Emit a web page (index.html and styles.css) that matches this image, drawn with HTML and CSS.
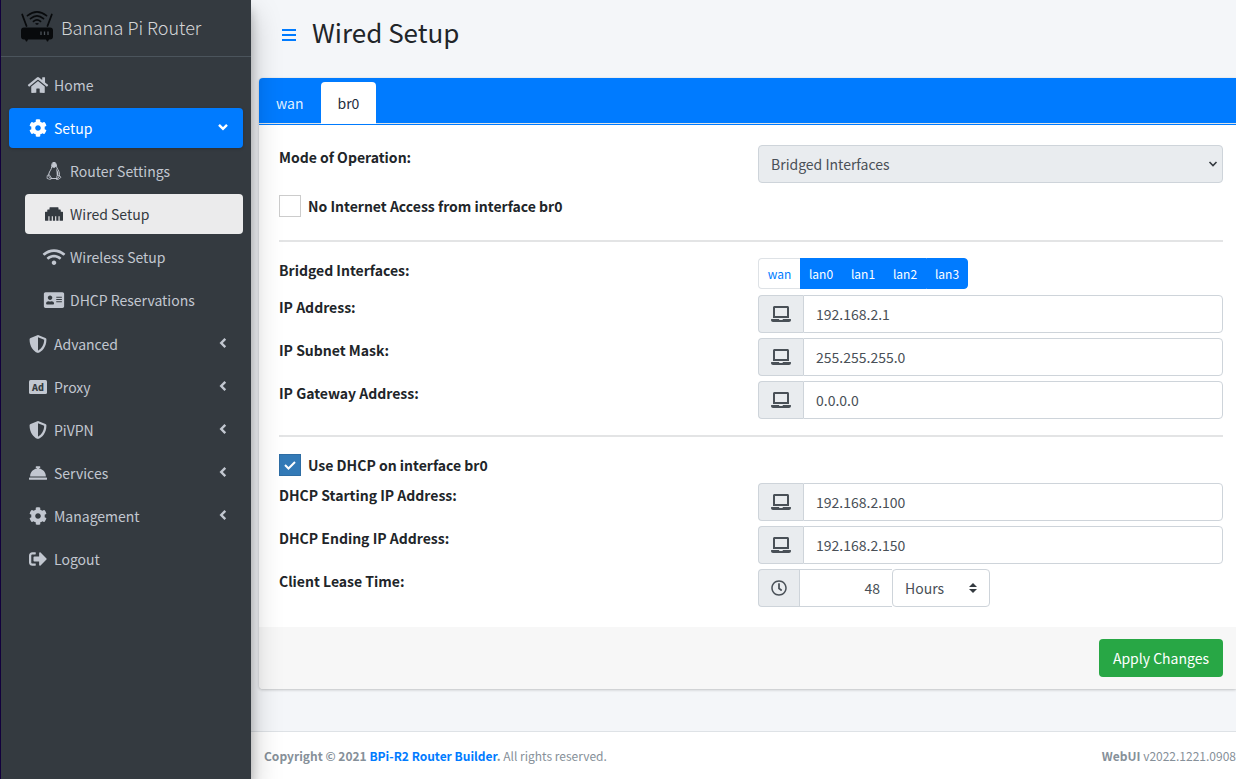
FILE: index.html
```
<!DOCTYPE html>
<html lang="en">
<head>
<meta charset="utf-8">
<title>Wired Setup</title>
<link rel="stylesheet" href="styles.css">
</head>
<body>
<svg class="sprite" aria-hidden="true">
  <symbol id="cog" viewBox="0 0 512 512"><path d="M487.4 315.7l-42.6-24.6c4.3-23.2 4.3-47 0-70.2l42.6-24.6c4.9-2.8 7.1-8.6 5.5-14-11.1-35.6-30-67.8-54.7-94.6-3.8-4.1-10-5.1-14.8-2.3L380.8 110c-17.9-15.4-38.5-27.3-60.8-35.1V25.8c0-5.6-3.9-10.5-9.4-11.7-36.7-8.2-74.3-7.8-109.2 0-5.5 1.2-9.4 6.1-9.4 11.7V75c-22.2 7.9-42.8 19.8-60.8 35.1L88.7 85.5c-4.9-2.8-11-1.9-14.8 2.3-24.7 26.7-43.6 58.9-54.7 94.6-1.7 5.4.6 11.2 5.5 14L67.3 221c-4.3 23.2-4.3 47 0 70.2l-42.6 24.6c-4.9 2.8-7.1 8.6-5.5 14 11.1 35.6 30 67.8 54.7 94.6 3.8 4.1 10 5.1 14.8 2.3l42.6-24.6c17.9 15.4 38.5 27.3 60.8 35.1v49.2c0 5.6 3.9 10.5 9.4 11.7 36.7 8.2 74.3 7.8 109.2 0 5.5-1.2 9.4-6.1 9.4-11.7v-49.2c22.2-7.9 42.8-19.8 60.8-35.1l42.6 24.6c4.9 2.8 11 1.9 14.8-2.3 24.7-26.7 43.6-58.9 54.7-94.6 1.5-5.5-.7-11.3-5.6-14.1zM256 336c-44.1 0-80-35.9-80-80s35.9-80 80-80 80 35.9 80 80-35.9 80-80 80z"/></symbol>
  <symbol id="shield" viewBox="0 0 512 512"><path d="M466.5 83.7l-192-80a48.15 48.15 0 0 0-36.9 0l-192 80C27.7 91.1 16 108.6 16 128c0 198.5 114.5 335.7 221.5 380.3 11.8 4.9 25.1 4.9 36.9 0C360.1 472.6 496 349.3 496 128c0-19.4-11.7-36.9-29.5-44.3zM256.1 446.3l-.1-381 175.9 73.3c-3.3 151.4-82.1 261.1-175.8 307.7z"/></symbol>
  <symbol id="laptop" viewBox="0 0 640 512"><path d="M624 416H381.54c-.74 19.81-14.71 32-32.74 32H288c-18.69 0-33.02-17.47-32.77-32H16c-8.8 0-16 7.2-16 16v16c0 35.2 28.8 64 64 64h512c35.2 0 64-28.8 64-64v-16c0-8.8-7.2-16-16-16zM576 48c0-26.4-21.6-48-48-48H112C85.6 0 64 21.6 64 48v336h512V48zm-64 272H128V64h384v256z"/></symbol>
  <symbol id="left" viewBox="0 0 8 12"><path d="M6.3 1.8 2.2 6l4.1 4.2" fill="none" stroke="currentColor" stroke-width="2.4"/></symbol>
</svg>

<div class="layout">
  <aside class="sidebar">
    <a class="brand" href="#">
      <svg class="brand-logo" viewBox="0 0 32 32" aria-hidden="true">
        <path d="M1.200 4.500 5.500 16M30.800 4.500 26.500 16" stroke="#080a0c" stroke-width="1.800" stroke-linecap="round"/>
        <path d="M6.500 5.600Q16-2 25.500 5.600M9.500 8.600Q16 3 22.500 8.600M12.500 11.400Q16 8.200 19.500 11.400" fill="none" stroke="#080a0c" stroke-width="1.700" stroke-linecap="round"/>
        <path d="M14 13.800a2.500 2 0 0 1 4 0L16 15z" fill="#080a0c"/>
        <path d="M3 17.500h26q3 0 3 3v6q0 3-3 3h-1l-1 2h-1l-1-2H7l-1 2H5l-1-2H3q-3 0-3-3v-6q0-3 3-3z" fill="#080a0c"/>
        <path d="M20 21.500v3.500M23.500 21.500v3.500M27 21.500v3.500" stroke="#4b5157" stroke-width="1.300"/>
      </svg>
      <span class="brand-text">Banana Pi Router</span>
    </a>
    <nav class="menu">
      <a class="link" href="#"><svg class="icon" viewBox="0 0 576 512"><path d="M280.37 148.26L96 300.11V464a16 16 0 0 0 16 16l112.06-.29a16 16 0 0 0 15.92-16V368a16 16 0 0 1 16-16h64a16 16 0 0 1 16 16v95.64a16 16 0 0 0 16 16.05L464 480a16 16 0 0 0 16-16V300L295.67 148.26a12.19 12.19 0 0 0-15.3 0zM571.6 251.47L488 182.56V44.05a12 12 0 0 0-12-12h-56a12 12 0 0 0-12 12v72.61L318.47 43a48 48 0 0 0-61 0L4.34 251.47a12 12 0 0 0-1.6 16.9l25.5 31A12 12 0 0 0 45.15 301l235.22-193.74a12.19 12.19 0 0 1 15.3 0L530.9 301a12 12 0 0 0 16.9-1.6l25.5-31a12 12 0 0 0-1.7-16.93z"/></svg><span>Home</span></a>
      <a class="link open" href="#"><svg class="icon"><use href="#cog"/></svg><span>Setup</span><svg class="arrow down" viewBox="0 0 12 12"><path d="M2 3.800 6 7.800l4-4" fill="none" stroke="currentColor" stroke-width="2.400"/></svg></a>
      <div class="submenu">
        <a class="link" href="#"><svg class="icon" viewBox="0 0 18 18">
          <path d="M6.700 4.500C6.500 1.500 7.300.4 9 .4s2.600 1.300 2.500 3.800c0 2.300 3 4.300 3 8.300 0 2-1 3.500-2.500 4H6c-1.800-.8-2.600-2.500-2.200-4.500.5-3 3-4.400 2.900-7.500z" fill="none" stroke="currentColor" stroke-width="1"/>
          <path d="M6.900 5.200c0-3.300.6-4.700 2.200-4.700s2.300 1.300 2.200 4L9.200 6zM11 6.500c1.800 2.300 2.800 4.200 2.200 7.500l-1.600-1.500c.3-2-.2-4-.6-6z"/>
          <path d="m2.300 13.400 2-.6 2.500 3.600-1.300 1.200-3.500-1.200zM12 13.500l2.200-.2 1.800 2-3 2.300h-1.500z" fill="none" stroke="currentColor" stroke-width=".8"/></svg><span>Router Settings</span></a>
        <a class="link current" href="#" aria-current="page"><svg class="icon" viewBox="0 0 512 512"><path d="M496 192h-48v-48c0-8.800-7.200-16-16-16h-48V80c0-8.800-7.200-16-16-16H144c-8.800 0-16 7.200-16 16v48H80c-8.800 0-16 7.200-16 16v48H16c-8.800 0-16 7.200-16 16v224c0 8.800 7.200 16 16 16h80V320h32v128h64V320h32v128h64V320h32v128h64V320h32v128h80c8.800 0 16-7.200 16-16V208c0-8.800-7.200-16-16-16z"/></svg><span>Wired Setup</span></a>
        <a class="link" href="#"><svg class="icon wide" viewBox="0 0 640 512"><path d="M634.910 154.880C457.740-8.990 182.190-8.930 5.090 154.880c-6.660 6.160-6.790 16.590-.35 22.980l34.240 33.970c6.140 6.100 16.020 6.230 22.400.38 145.920-133.680 371.300-133.710 517.250 0 6.380 5.850 16.260 5.710 22.400-.38l34.240-33.970c6.430-6.390 6.300-16.820-.36-22.980zM320 352c-35.350 0-64 28.650-64 64s28.650 64 64 64 64-28.650 64-64-28.650-64-64-64zm202.670-83.590c-115.260-101.930-290.210-101.820-405.340 0-6.900 6.100-7.120 16.690-.57 23.150l34.440 33.990c6 5.920 15.660 6.320 22.050.8 83.950-72.570 209.740-72.410 293.490 0 6.390 5.520 16.050 5.130 22.050-.8l34.440-33.990c6.560-6.460 6.330-17.060-.56-23.150z"/></svg><span>Wireless Setup</span></a>
        <a class="link" href="#"><svg class="icon" viewBox="0 0 576 512"><path d="M528 32H48C21.500 32 0 53.500 0 80v352c0 26.500 21.500 48 48 48h480c26.500 0 48-21.500 48-48V80c0-26.500-21.500-48-48-48zm-352 96c35.300 0 64 28.700 64 64s-28.700 64-64 64-64-28.700-64-64 28.700-64 64-64zm112 236.800c0 10.600-10 19.200-22.400 19.200H86.400C74 384 64 375.400 64 364.800v-19.200c0-31.800 30.100-57.600 67.200-57.600h5c12.300 5.100 25.700 8 39.800 8s27.600-2.900 39.800-8h5c37.100 0 67.200 25.800 67.200 57.600v19.200zM512 312c0 4.400-3.600 8-8 8H360c-4.400 0-8-3.600-8-8v-16c0-4.400 3.600-8 8-8h144c4.400 0 8 3.600 8 8v16zm0-64c0 4.400-3.600 8-8 8H360c-4.400 0-8-3.600-8-8v-16c0-4.400 3.600-8 8-8h144c4.400 0 8 3.600 8 8v16zm0-64c0 4.400-3.600 8-8 8H360c-4.400 0-8-3.600-8-8v-16c0-4.400 3.600-8 8-8h144c4.400 0 8 3.600 8 8v16z"/></svg><span>DHCP Reservations</span></a>
      </div>
      <a class="link" href="#"><svg class="icon"><use href="#shield"/></svg><span>Advanced</span><svg class="arrow"><use href="#left"/></svg></a>
      <a class="link" href="#"><svg class="icon" viewBox="0 0 18 18"><rect y="2" width="18" height="14" rx="1.500"/><text class="ad-text" x="9" y="12.500" text-anchor="middle">Ad</text></svg><span>Proxy</span><svg class="arrow"><use href="#left"/></svg></a>
      <a class="link" href="#"><svg class="icon"><use href="#shield"/></svg><span>PiVPN</span><svg class="arrow"><use href="#left"/></svg></a>
      <a class="link" href="#"><svg class="icon" viewBox="0 0 512 512"><path d="M288 130.540V112h16c8.840 0 16-7.160 16-16V80c0-8.840-7.160-16-16-16h-96c-8.840 0-16 7.160-16 16v16c0 8.840 7.160 16 16 16h16v18.540C115.490 146.110 32 239.180 32 352h448c0-112.820-83.490-205.890-192-221.460zM496 384H16c-8.840 0-16 7.160-16 16v32c0 8.840 7.160 16 16 16h480c8.840 0 16-7.160 16-16v-32c0-8.840-7.160-16-16-16z"/></svg><span>Services</span><svg class="arrow"><use href="#left"/></svg></a>
      <a class="link" href="#"><svg class="icon"><use href="#cog"/></svg><span>Management</span><svg class="arrow"><use href="#left"/></svg></a>
      <a class="link" href="#"><svg class="icon" viewBox="0 0 512 512"><path d="M497 273L329 441c-15 15-41 4.500-41-17v-96H152c-13.300 0-24-10.700-24-24v-96c0-13.300 10.700-24 24-24h136V88c0-21.400 25.900-32 41-17l168 168c9.300 9.400 9.300 24.600 0 34zM192 436v-40c0-6.600-5.400-12-12-12H96c-17.700 0-32-14.300-32-32V160c0-17.700 14.300-32 32-32h84c6.600 0 12-5.400 12-12V76c0-6.600-5.400-12-12-12H96c-53 0-96 43-96 96v192c0 53 43 96 96 96h84c6.600 0 12-5.400 12-12z"/></svg><span>Logout</span></a>
    </nav>
  </aside>

  <div class="page">
    <header class="page-head">
      <button class="toggle" type="button" aria-label="Toggle menu"><svg viewBox="0 0 14 12"><path d="M0 1h14M0 6h14M0 11h14" stroke="currentColor" stroke-width="2"/></svg></button>
      <h1>Wired Setup</h1>
    </header>
    <main>
      <form class="card">
        <div class="tabs">
          <a class="tab" href="#">wan</a>
          <a class="tab selected" href="#">br0</a>
        </div>
        <div class="card-body">
          <div class="row">
            <label for="mode">Mode of Operation:</label>
            <div class="select-wrap">
              <select id="mode" class="field" disabled><option>Bridged Interfaces</option></select>
              <svg class="caret" viewBox="0 0 10 10"><path d="m1.500 3 3.500 3.500L8.500 3" fill="none" stroke="#343a40" stroke-width="1.600"/></svg>
            </div>
          </div>
          <div class="check first">
            <input type="checkbox" id="nonet"><label for="nonet">No Internet Access from interface br0</label>
          </div>
          <hr>
          <div class="row bridge">
            <span class="label">Bridged Interfaces:</span>
            <div class="segments">
              <button type="button">wan</button><button type="button" class="on">lan0</button><button type="button" class="on">lan1</button><button type="button" class="on">lan2</button><button type="button" class="on">lan3</button>
            </div>
          </div>
          <div class="rows addresses">
            <div class="row"><label for="ip">IP Address:</label><div class="group"><span class="addon"><svg class="laptop"><use href="#laptop"/></svg></span><input class="field" id="ip" type="text" value="192.168.2.1"></div></div>
            <div class="row"><label for="mask">IP Subnet Mask:</label><div class="group"><span class="addon"><svg class="laptop"><use href="#laptop"/></svg></span><input class="field" id="mask" type="text" value="255.255.255.0"></div></div>
            <div class="row"><label for="gw">IP Gateway Address:</label><div class="group"><span class="addon"><svg class="laptop"><use href="#laptop"/></svg></span><input class="field" id="gw" type="text" value="0.0.0.0"></div></div>
          </div>
          <hr>
          <div class="check second">
            <input type="checkbox" id="dhcp" checked><label for="dhcp">Use DHCP on interface br0</label>
            <svg class="tick" viewBox="0 0 22 22"><path d="m6 11 3.500 3.500L16 8" fill="none" stroke="#fff" stroke-width="2"/></svg>
          </div>
          <div class="rows">
            <div class="row"><label for="start">DHCP Starting IP Address:</label><div class="group"><span class="addon"><svg class="laptop"><use href="#laptop"/></svg></span><input class="field" id="start" type="text" value="192.168.2.100"></div></div>
            <div class="row"><label for="end">DHCP Ending IP Address:</label><div class="group"><span class="addon"><svg class="laptop"><use href="#laptop"/></svg></span><input class="field" id="end" type="text" value="192.168.2.150"></div></div>
            <div class="row"><label for="lease">Client Lease Time:</label><div class="group lease">
              <span class="addon"><svg class="clock" viewBox="0 0 512 512"><path d="M256 8C119 8 8 119 8 256s111 248 248 248 248-111 248-248S393 8 256 8zm0 448c-110.500 0-200-89.500-200-200S145.500 56 256 56s200 89.500 200 200-89.500 200-200 200zm61.800-104.400l-84.900-61.700c-3.100-2.300-4.900-5.900-4.900-9.700V116c0-6.600 5.400-12 12-12h32c6.600 0 12 5.400 12 12v141.700l66.800 48.600c5.400 3.900 6.500 11.400 2.600 16.800L334.600 349c-3.900 5.300-11.400 6.500-16.800 2.600z"/></svg></span>
              <input class="field amount" id="lease" type="text" value="48">
              <div class="select-wrap unit">
                <select class="field" aria-label="Lease time unit"><option>Hours</option></select>
                <svg class="caret sort" viewBox="0 0 8 10"><path d="M4 0 0 4h8zM4 10 0 6h8z" fill="#343a40"/></svg>
              </div>
            </div></div>
          </div>
        </div>
        <div class="card-foot"><button class="apply" type="submit">Apply Changes</button></div>
      </form>
    </main>
    <footer class="page-foot">
      <span><strong>Copyright © 2021 <a href="#">BPi-R2 Router Builder</a>.</strong> All rights reserved.</span>
      <span class="version"><strong>WebUI</strong> v2022.1221.0908</span>
    </footer>
  </div>
</div>
</body>
</html>
```

FILE: styles.css
```
* { box-sizing: border-box; }

body {
  margin: 0;
  overflow-x: hidden;
  background: #f4f6f9;
  color: #212529;
  font: 14px/24px "Noto Sans CJK SC", "Open Sans", sans-serif;
}

a { text-decoration: none; }
button, input, select { font: inherit; margin: 0; }
svg { display: block; fill: currentColor; }
.sprite { position: absolute; width: 0; height: 0; }

.layout { display: flex; min-height: 100vh; }

/* Sidebar */
.sidebar {
  position: relative;
  z-index: 2;
  flex: 0 0 251px;
  border-left: 1px solid #12003c;
  background: #343a40;
  box-shadow: 0 14px 28px rgba(0, 0, 0, .25), 0 10px 10px rgba(0, 0, 0, .22);
}
.brand {
  display: flex;
  align-items: center;
  gap: 8px;
  height: 57px;
  padding-left: 20px;
  padding-bottom: 2px;
  border-bottom: 1px solid #4b545c;
  color: rgba(255, 255, 255, .8);
}
.brand-logo { width: 32px; height: 32px; margin-bottom: 2px; }
.brand-text { font-size: 18px; font-weight: 300; }
.menu { display: flex; flex-direction: column; gap: 3px; padding: 8px; }
.submenu {
  display: flex;
  flex-direction: column;
  gap: 3px;
  padding-left: 16px;
  padding-bottom: 1px;
}
.link {
  display: flex;
  align-items: center;
  gap: 3px;
  height: 40px;
  padding: 0 14px 0 16px;
  border-radius: 4px;
  color: #c2c7d0;
}
.icon { width: 26px; height: 18px; }
.arrow { width: 12px; height: 12px; margin-left: auto; margin-bottom: 2px; }
.link.open { background: #007bff; color: #fff; box-shadow: 0 1px 3px rgba(0, 0, 0, .2); }
.link.current { background: rgba(255, 255, 255, .9); color: #343a40; }
.ad-text { font-size: 9px; font-weight: 900; fill: #343a40; }

/* Page */
.page { flex: 1; min-width: 0; display: flex; flex-direction: column; }
.page-head { display: flex; align-items: center; gap: 16px; padding: 14px 31px 28px; }
.page-head h1 { margin: 0; font-size: 26px; line-height: 36px; font-weight: 400; }
.toggle { padding: 6px 0 0; border: 0; background: none; color: #007bff; }
.toggle svg { width: 14px; height: 12px; }
main { flex: 1; padding-left: 8px; }

.card {
  border-radius: 4px 0 0 4px;
  background: #fff;
  box-shadow: 0 0 1px rgba(0, 0, 0, .13), 0 1px 3px rgba(0, 0, 0, .2);
}
.tabs {
  display: flex;
  padding-top: 4px;
  border-bottom: 1px solid #007bff;
  border-radius: 4px 0 0 0;
  background: linear-gradient(#dee2e6, #dee2e6) bottom / 100% 1px no-repeat padding-box, #007bff;
}
.tab { padding: 9px 17px; border-radius: 4px 4px 0 0; color: rgba(255, 255, 255, .9); }
.tab.selected { background: #fff; color: #1f2d3d; }
.card-body { padding: 20px 13px 20px 20px; }
.row { display: grid; grid-template-columns: 1fr 1fr; gap: 14px; align-items: start; }
.rows { display: grid; gap: 5px; }
.addresses { margin-bottom: 16px; }
label, .label { font-weight: 700; }
hr { margin: 0; border: 0; border-top: 2px solid #e3e4e5; }

.check { display: grid; grid-template-columns: 22px 1fr; column-gap: 7px; align-items: center; height: 22px; }
.check input { appearance: none; width: 22px; height: 22px; border: 1px solid #ccc; background: #fff; }
.check input:checked { border-color: #2e6da4; background: #337ab7; }
.check input, .tick { grid-area: 1 / 1; }
.tick { width: 22px; height: 22px; pointer-events: none; }
.check.first { margin: 11px 0 24px; }
.check.second { margin: 16px 0 8px; }

.field {
  width: 100%;
  min-width: 0;
  height: 38px;
  padding: 0 12px;
  border: 1px solid #ced4da;
  border-radius: 4px;
  background: #fff;
  color: #495057;
  appearance: none;
}
.field:disabled { background: #e9ecef; opacity: 1; }
.select-wrap { display: grid; align-items: center; }
.select-wrap > * { grid-area: 1 / 1; }
.caret { width: 10px; height: 10px; margin-right: 5px; justify-self: end; pointer-events: none; }
.sort { width: 8px; height: 10px; margin-right: 13px; }

.bridge { margin: 16px 0 6px; }
.segments { display: flex; }
.segments button {
  width: 42px;
  height: 31px;
  padding: 0;
  border: 1px solid #007bff;
  background: #007bff;
  color: #fff;
  font-size: 12px;
}
.segments button:first-child { border-color: #dee2e6; border-right: 0; border-radius: 4px 0 0 4px; background: #fff; color: #007bff; }
.segments button:last-child { border-radius: 0 4px 4px 0; }

.group { display: flex; }
.addon {
  display: flex;
  align-items: center;
  height: 38px;
  padding: 0 12px;
  border: 1px solid #ced4da;
  border-right: 0;
  border-radius: 4px 0 0 4px;
  background: #e9ecef;
  color: #495057;
}
.addon + .field { flex: 1; border-radius: 0 4px 4px 0; }
.laptop { width: 20px; height: 16px; }
.clock { width: 16px; height: 16px; }
.addon + .amount { flex: 0 0 93px; border-radius: 0; border-right: 0; text-align: right; }
.unit { width: 98px; }

.card-foot { display: flex; justify-content: flex-end; padding: 12px 13px 12px 20px; border-radius: 0 0 0 4px; background: #f7f7f7; }
.apply { height: 38px; padding: 0 14px; border: 0; border-radius: 4px; background: #28a745; color: #fff; }

.page-foot {
  display: flex;
  justify-content: space-between;
  padding: 12px 0 11px 13px;
  border-top: 1px solid #dee2e6;
  background: #fff;
  color: #869099;
  font-size: 12px;
  white-space: nowrap;
}
.page-foot a { color: #007bff; }
```
